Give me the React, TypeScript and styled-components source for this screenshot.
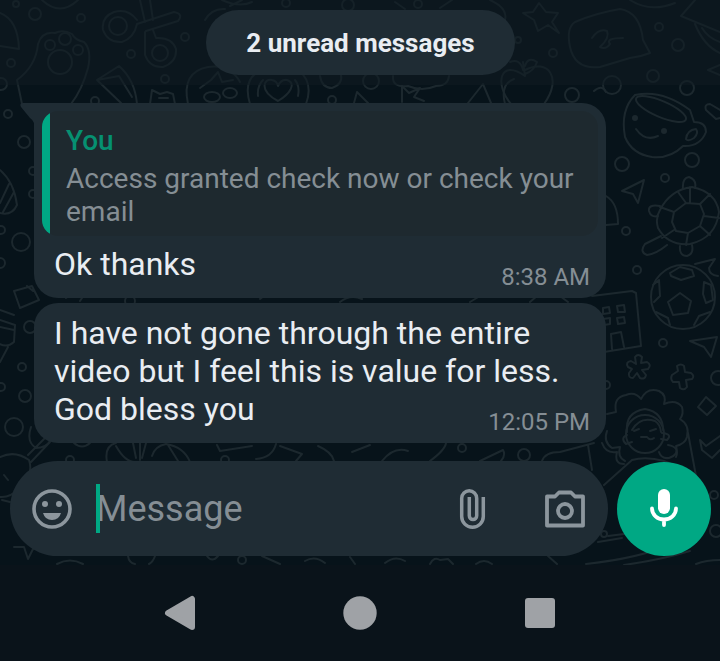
import React from "react";
import styled, { createGlobalStyle } from "styled-components";

const GlobalStyle = createGlobalStyle`
  * { box-sizing: border-box; }
  body {
    margin: 0;
    background: #0a131a;
    font-family: Roboto, "Liberation Sans", sans-serif;
  }
  button { border: 0; padding: 0; background: none; cursor: pointer; }
`;

const Screen = styled.div`
  min-height: 100vh;
  display: flex;
  flex-direction: column;
  background: #0a131a;
`;

const Chat = styled.main`
  position: relative;
  overflow: hidden;
  background: #07131a;
  padding: 10px 9px 9px 10px;
`;

const Wallpaper = styled.svg`
  position: absolute;
  inset: 0;
  width: 100%;
  height: 100%;
  fill: none;
  stroke: #1c282e;
  stroke-width: 2;
  stroke-linecap: round;
  stroke-linejoin: round;
`;

const Content = styled.div`
  position: relative;
  display: flex;
  flex-direction: column;
`;

const UnreadPill = styled.div`
  align-self: center;
  height: 65px;
  padding: 0 40px;
  border-radius: 33px;
  display: flex;
  align-items: center;
  background: #1f2c34;
  color: #e9edf2;
  font-size: 26px;
  font-weight: 700;
`;

const Messages = styled.section`
  display: flex;
  flex-direction: column;
  gap: 5px;
  margin: 28px 105px 18px 24px;
`;

const Bubble = styled.article<{ $tail?: boolean }>`
  position: relative;
  padding: 8px;
  border-radius: ${(p) => (p.$tail ? "0 24px 24px 24px" : "24px")};
  background: #1f2c34;
`;

const Tail = styled.svg`
  position: absolute;
  top: 0;
  left: -14px;
  width: 20px;
  height: 20px;
  fill: #1f2c34;
`;

const Quote = styled.blockquote`
  margin: 0;
  padding: 12px 16px 8px 24px;
  border-radius: 16px;
  background: linear-gradient(to right, #00a884 8px, #1e292f 8px);
  color: #858e94;
  font-size: 28px;
  line-height: 33px;
`;

const QuoteAuthor = styled.div`
  color: #069071;
  font-weight: 500;
  line-height: 36px;
  margin-bottom: 3px;
`;

const Body = styled.div<{ $top: number }>`
  display: flow-root;
  padding: ${(p) => p.$top}px 8px 0 12px;
  color: #e9edf2;
  font-size: 32px;
  line-height: 38px;
`;

const Time = styled.time`
  float: right;
  margin: 19px 0 0 12px;
  color: #858e94;
  font-size: 24px;
  line-height: 26px;
`;

const Composer = styled.form`
  display: flex;
  align-items: center;
  gap: 9px;
`;

const Field = styled.div`
  flex: 1;
  min-width: 0;
  height: 95px;
  padding: 0 21px 0 20px;
  border-radius: 48px;
  display: flex;
  align-items: center;
  background: #1f2c34;
`;

const IconButton = styled.button`
  flex: none;
  width: 44px;
  height: 44px;
  display: grid;
  place-items: center;
  color: #8c969d;
`;

const InputWrap = styled.label`
  position: relative;
  flex: 1;
  min-width: 0;
  margin-left: 22px;
  display: flex;
`;

const Input = styled.input`
  width: 100%;
  height: 50px;
  padding: 0;
  border: 0;
  outline: 0;
  background: transparent;
  color: #e9edf2;
  font: 36px Roboto, "Liberation Sans", sans-serif;
  &::placeholder { color: #858e94; opacity: 1; }
`;

const Caret = styled.span`
  position: absolute;
  left: 0;
  top: 0;
  width: 4px;
  height: 49px;
  background: #00a884;
`;

const Actions = styled.div`
  display: flex;
  gap: 49px;
`;

const MicButton = styled.button`
  flex: none;
  width: 94px;
  height: 94px;
  border-radius: 50%;
  display: grid;
  place-items: center;
  background: #00a884;
`;

const SystemNav = styled.nav`
  height: 96px;
  padding: 0 12.5%;
  display: grid;
  grid-template-columns: repeat(3, 1fr);
`;

const NavButton = styled.button`
  display: grid;
  place-items: center;
  color: #9fa2a6;
`;

const dots: [number, number, number][] = [
  [16, 4, 3], [35, 14, 6], [81, 18, 4], [11, 63, 4], [1, 84, 6], [8, 114, 4], [24, 142, 6],
  [131, 54, 4], [165, 79, 4], [185, 37, 4], [95, 101, 4], [33, 194, 4], [33, 171, 4],
  [21, 242, 9], [1, 230, 4], [0, 263, 5], [30, 327, 6], [22, 367, 4], [1, 387, 4],
  [25, 396, 6], [14, 427, 9], [518, 40, 3], [553, 53, 4], [659, 27, 4], [678, 45, 6],
  [653, 76, 6], [612, 85, 9], [572, 95, 7], [687, 88, 7], [622, 164, 7], [692, 160, 7],
  [665, 178, 4], [626, 231, 4], [637, 270, 4], [663, 343, 4], [718, 378, 7], [606, 385, 4],
  [371, 81, 8], [332, 100, 4], [286, 3, 4], [348, 5, 6], [462, 448, 4], [524, 455, 6],
  [714, 495, 4], [716, 531, 6], [70, 460, 4], [225, 460, 4], [242, 560, 4], [130, 301, 5],
  [604, 534, 3], [418, 4, 4],
];

const doodles: string[] = [
  // left column, top
  "M0 13Q18 20 19 49L0 46M42 0Q60 17 78 0",
  "M22 104L17 80Q36 66 38 44Q42 31 55 33Q63 29 72 34Q75 40 84 42Q92 50 88 68Q82 90 71 104",
  "M140 0L145 22M150 0L153 20M137 24L174 12Q184 14 178 21L146 31M137 20Q128 8 114 12Q101 17 103 30Q108 43 122 42Q134 38 137 24M145 32L145 55Q150 68 163 67Q177 62 176 49Q172 37 156 38L153 30",
  "M97 80L119 66Q135 80 137 104M97 80L121 103M97 80L119 76L132 97M150 104L152 90L160 94L167 92L173 94L175 104M159 98L168 98",
  "M188 104Q181 72 208 67Q230 64 240 82M200 88L211 80L218 72L222 82L233 80",
  "M222 0Q240 8 252 2M490 0Q508 8 505 20M205 20Q212 8 225 9M230 6L242 0M395 2L405 9M440 8L452 0",
  // row under the unread label
  "M278 101C258 90 264 78 272 80Q277 81 278 86Q281 79 287 80C297 83 290 94 278 101Z",
  "M250 104Q242 78 262 70M306 104Q314 82 298 70M258 96Q257 86 263 80M298 96Q300 86 295 80",
  "M320 76Q322 88 332 88Q343 84 341 75M393 76Q392 88 408 86Q422 92 436 86Q448 86 449 76",
  "M402 102L402 86L409 93L420 88L414 97L424 101M354 103L357 92L368 103M468 103L483 84L491 103M505 104Q500 84 514 79",
  // apple, star, sticker, wing
  "M525 76C500 58 494 84 511 104M525 76L523 62M525 70C548 58 563 78 544 104M510 62Q520 58 523 70M525 66Q528 56 537 62Q534 71 525 74",
  "M523 13L533 12L539 3L546 12L558 13L552 22L559 33L548 25L538 31L534 20Z",
  "M575 22Q596 13 620 9Q640 12 643 40L650 53Q640 57 630 58L600 67Q575 70 570 47Q566 28 575 22ZM592 38Q599 28 607 31Q610 38 600 47Q606 50 610 44Q605 38 623 38",
  "M630 0Q650 13 675 3M695 0L681 16L720 32M695 24Q704 46 720 53M702 28Q708 38 720 42M708 70L720 65M708 70L720 75M594 91Q602 84 606 92",
  // cup
  "M635 95Q662 89 690 110L694 122Q706 122 706 132Q700 147 683 146Q670 159 652 157Q632 154 625 137Q620 110 635 95ZM636 129Q645 142 658 136M686 139Q687 130 696 129Q699 133 694 138Q688 142 686 139",
  "M720 110L710 104Q704 104 706 110L716 119L720 118",
  // plane, turtle
  "M622 191L644 180L638 203L633 194ZM606 196Q618 203 618 224L606 225",
  "M674 212L686 203L700 204L704 214L700 226L688 233L676 231L672 222ZM660 210Q670 190 692 187Q716 192 719 212Q716 238 690 244Q668 246 658 228Q655 218 660 210M674 212L660 207M686 203L678 192M690 203L690 187M700 204L710 194M704 216L719 218M700 226L710 235M688 233L686 245M674 230L662 238",
  "M683 189Q682 178 689 177Q697 180 695 188M660 206Q648 204 649 211Q651 218 658 216M661 236L645 244Q639 252 647 255Q656 254 667 245M680 246Q679 256 687 256Q694 254 692 245",
  // ball
  "M680 293L691 301L688 313L673 315L668 302ZM670 273L680 267L692 270L694 276L681 280L671 276ZM704 282L711 285L713 300L706 303L703 294ZM653 285L659 280L660 296L654 302M656 312L668 318L670 325M710 312L699 316L694 325M695 264L715 259L709 268Q709 275 718 276",
  // building
  "M592 296L632 291L636 293L641 346L604 352M603 308L609 307L610 313L603 314ZM617 306L624 305L625 312L618 312ZM603 319L610 318L610 324L604 325ZM617 318L624 317L625 323L618 324ZM612 349L611 334L621 332L624 347",
  "M690 341L717 337L711 357L704 347ZM706 397L716 406L707 415L698 407Z",
  // five-petal flower, plus
  "M636 364L635 357Q638 353 642 357L641 363L647 362Q652 365 648 369L642 370L646 375Q645 380 640 378L637 373L633 378Q628 378 629 373L632 369L628 367Q625 362 631 361Z",
  "M678 371L677 366Q681 363 684 366L685 372L691 373Q695 376 692 379L686 380L687 387Q684 391 680 388L679 382L673 382Q670 379 672 375Z",
  // girl with curls
  "M607 414L616 412Q613 397 626 395Q635 391 641 399Q647 387 659 391Q667 395 664 404Q676 399 682 407Q684 414 680 419Q690 425 687 437Q685 444 676 446Q679 455 669 458Q661 459 659 452M607 431Q603 442 612 448L620 447Q617 457 625 461",
  "M627 432Q625 412 645 409Q663 412 663 430M632 430Q640 416 655 421Q660 424 661 432M627 435Q620 438 626 444L632 442M662 433Q673 434 667 440L661 439M634 431L639 429M650 431L656 429M641 437L647 437Q650 441 654 438",
  "M688 433L696 476M720 436L706 446L700 440L702 450L712 458L720 450",
  // left column, lower
  "M0 170Q14 182 17 205Q12 216 0 213M9 184L0 203M14 192L3 212M14 291L32 286L39 300L20 308ZM27 286L33 291",
  "M0 320L15 325L14 342Q7 348 0 344M8 347L0 362M14 330L0 327M0 310L14 315",
  "M31 427Q26 442 36 448Q46 448 50 441M45 438L28 455M50 442L31 462M0 457Q15 450 29 460Q34 475 20 488Q10 498 0 497M4 475L8 480M2 500L10 502",
  // strip between bubbles and composer
  "M107 462Q104 446 116 443M116 446Q125 462 135 462M133 443L136 458M140 443L140 460M146 443L142 458M152 456Q155 446 166 444Q184 447 190 462M168 445L178 461M217 445L220 451L252 446M276 444Q272 458 256 459M74 443Q82 450 90 443",
  "M430 461Q445 450 446 443M480 461L503 450Q506 455 501 461M542 461Q545 452 560 452L594 443M588 445L592 470M604 485L632 460Q646 456 664 461L690 472M602 443Q606 454 617 452Q614 464 624 464M668 445Q680 447 676 457",
  "M280 446L302 454L296 461M318 446Q332 452 334 461M352 452L370 445M382 461Q394 446 408 451",
  // base of the wallpaper
  "M14 547L24 547L28 559L33 549L40 547M57 564Q70 557 83 564M128 556Q129 563 135 564M155 556Q153 562 149 564M207 556Q212 563 218 556M262 556L280 564M430 564Q434 556 440 560L448 559L453 564M476 564Q484 558 492 564M548 556L557 564M586 564Q640 558 668 545M624 565Q660 560 690 551M696 564Q706 560 720 560M608 536L624 534M598 542L622 538",
  "M305 561Q315 555 325 563M350 557L355 564M385 563Q395 555 405 561M66 298L76 292M80 301L84 295M260 299L268 293M340 302Q350 294 362 299M470 302L480 296M530 302L537 296M560 296L568 302",
];

function WallpaperArt() {
  return (
    <Wallpaper viewBox="0 0 720 565" preserveAspectRatio="xMidYMin slice" aria-hidden="true">
      {dots.map(([x, y, r]) => (
        <circle key={`${x}-${y}`} cx={x} cy={y} r={r} />
      ))}
      {doodles.map((d) => (
        <path key={d} d={d} />
      ))}
      <circle cx="60" cy="62" r="12" />
      <circle cx="50" cy="45" r="5" />
      <circle cx="65" cy="39" r="6" />
      <circle cx="78" cy="50" r="5" />
      <circle cx="118" cy="26" r="9" />
      <circle cx="160" cy="53" r="8" />
      <ellipse cx="212" cy="97" rx="8" ry="5" />
      <ellipse cx="230" cy="93" rx="7" ry="5" />
      <ellipse cx="661" cy="109" rx="27" ry="8" transform="rotate(23 661 109)" />
      <circle cx="683" cy="297" r="32" />
      <circle cx="645" cy="434" r="19" />
      <g fill="#1c282e" stroke="none">
        <circle cx="635" cy="118" r="3" />
        <circle cx="664" cy="131" r="3" />
      </g>
      <path d="M0 0H720V85H0Z" fill="#101c23" fillOpacity="0.55" stroke="none" />
    </Wallpaper>
  );
}

export default function App() {
  return (
    <>
      <GlobalStyle />
      <Screen>
        <Chat>
          <WallpaperArt />
          <Content>
            <UnreadPill>2 unread messages</UnreadPill>
            <Messages>
              <Bubble $tail>
                <Tail viewBox="0 0 20 20" aria-hidden="true">
                  <path d="M3 0H20V20H14Q13 17 10 15L1 4Q-1 0 3 0Z" />
                </Tail>
                <Quote>
                  <QuoteAuthor>You</QuoteAuthor>
                  Access granted check now or check your email
                </Quote>
                <Body $top={9}>
                  Ok thanks
                  <Time>8:38 AM</Time>
                </Body>
              </Bubble>
              <Bubble>
                <Body $top={3}>
                  I have not gone through the entire video but I feel this is value for less. God
                  bless you
                  <Time>12:05 PM</Time>
                </Body>
              </Bubble>
            </Messages>
            <Composer onSubmit={(e) => e.preventDefault()}>
              <Field>
                <IconButton type="button" aria-label="Emoji">
                  <svg width="42" height="42" viewBox="0 0 42 42" fill="currentColor">
                    <circle cx="21" cy="21" r="18" fill="none" stroke="currentColor" strokeWidth="3.6" />
                    <circle cx="14" cy="16" r="3" />
                    <circle cx="28" cy="16" r="3" />
                    <path d="M12 25H30Q28 32 21 32Q14 32 12 25Z" />
                  </svg>
                </IconButton>
                <InputWrap>
                  <Input type="text" placeholder="Message" aria-label="Message" />
                  <Caret />
                </InputWrap>
                <Actions>
                  <IconButton type="button" aria-label="Attach">
                    <svg width="32" height="44" viewBox="0 0 32 44" fill="none" stroke="currentColor" strokeWidth="3.5">
                      <path d="M27.3 10V29.5A10.8 10.8 0 0 1 5.7 29.5V11.2A7.5 7.5 0 0 1 20.7 11.2V28.8A3.7 3.7 0 0 1 13.3 28.8V10" />
                    </svg>
                  </IconButton>
                  <IconButton type="button" aria-label="Camera">
                    <svg width="44" height="44" viewBox="0 0 44 44" fill="none" stroke="currentColor" strokeWidth="3.8" strokeLinejoin="round">
                      <path d="M4 9.5H12L16 5.5H28L32 9.5H40V38.5H4Z" />
                      <circle cx="22" cy="24" r="7" />
                    </svg>
                  </IconButton>
                </Actions>
              </Field>
              <MicButton type="button" aria-label="Record voice message">
                <svg width="32" height="44" viewBox="0 0 32 44" fill="none" stroke="#fff" strokeWidth="3.8" strokeLinecap="round">
                  <rect x="10" y="2" width="12" height="25" rx="6" fill="#fff" stroke="none" />
                  <path d="M4 21.5A12 11 0 0 0 28 21.5M16 33V38" />
                </svg>
              </MicButton>
            </Composer>
          </Content>
        </Chat>
        <SystemNav aria-label="System">
          <NavButton type="button" aria-label="Back">
            <svg width="34" height="36" viewBox="0 0 34 36" fill="currentColor" stroke="currentColor" strokeWidth="6" strokeLinejoin="round">
              <path d="M5 18L29 4V32Z" />
            </svg>
          </NavButton>
          <NavButton type="button" aria-label="Home">
            <svg width="34" height="34" viewBox="0 0 34 34" fill="currentColor">
              <circle cx="17" cy="17" r="16.7" />
            </svg>
          </NavButton>
          <NavButton type="button" aria-label="Recent apps">
            <svg width="30" height="30" viewBox="0 0 30 30" fill="currentColor">
              <rect width="30" height="30" rx="3" />
            </svg>
          </NavButton>
        </SystemNav>
      </Screen>
    </>
  );
}
